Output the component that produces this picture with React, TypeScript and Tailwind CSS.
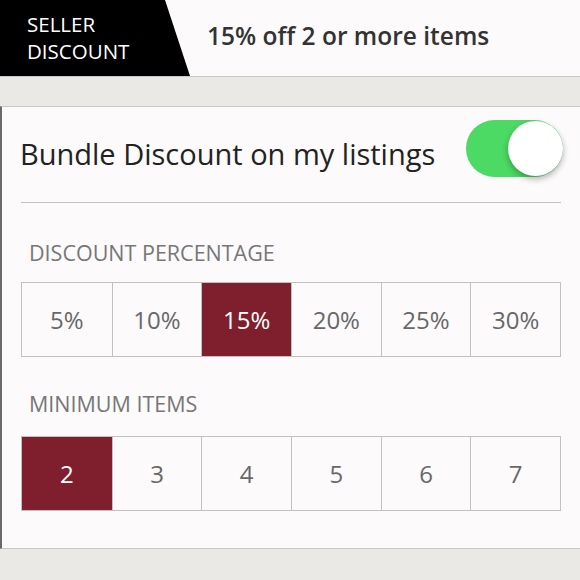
import React from "react";

const pct = ["5%", "10%", "15%", "20%", "25%", "30%"];
const items = ["2", "3", "4", "5", "6", "7"];

function Row({ values, selected }: { values: string[]; selected: number }) {
  return (
    <div className="mx-[19px] grid grid-cols-6 border border-[#c2c0c0] h-[75px]">
      {values.map((v, i) => (
        <div
          key={v}
          className={
            "flex items-center justify-center text-[24px] " +
            (i > 0 ? "border-l border-[#c2c0c0] " : "") +
            (i === selected ? "bg-[#7f1f2d] text-white" : "text-[#686868]")
          }
        >
          {v}
        </div>
      ))}
    </div>
  );
}

export default function App() {
  return (
    <div
      className="w-[580px] h-[580px] overflow-hidden bg-[#ebe9e6] flex flex-col"
      style={{ fontFamily: "'Open Sans', Lato, sans-serif" }}
    >
      <div className="h-[77px] bg-[#fcfafa] flex items-center border-b border-[#c9c7c4] shrink-0">
        <div className="h-full w-[190px] bg-black [clip-path:polygon(0_0,165px_0,190px_100%,0_100%)] flex flex-col justify-center pl-[27px] text-white text-[20.5px] leading-[27px] pb-[1px]">
          <span>SELLER</span>
          <span>DISCOUNT</span>
        </div>
        <div className="ml-[17px] text-[24.5px] font-semibold text-[#333] mb-[4px]">15% off 2 or more items</div>
      </div>
      <div className="h-[29px] shrink-0" />
      <div className="bg-[#fcfafa] border-t border-b border-[#c9c7c4] border-l-2 border-l-[#6a6a6a] h-[443px] shrink-0 flex flex-col">
        <div className="h-[95px] flex justify-between pl-[18px] pr-[17px]">
          <span className="text-[29px] text-[#222] self-center mt-[-2px]">Bundle Discount on my listings</span>
          <div className="relative mt-[13px] w-[97px] h-[57px] rounded-full bg-[#4cd964]">
            <div className="absolute right-0 top-[1px] w-[55px] h-[55px] rounded-full bg-white shadow-[0_3px_6px_rgba(0,0,0,0.3)]" />
          </div>
        </div>
        <div className="mx-[19px] border-t border-[#c4c2c2]" />
        <div className="h-[79px] flex items-end pl-[27px] pb-[14px] text-[21.5px] leading-[30px] text-[#777]">DISCOUNT PERCENTAGE</div>
        <Row values={pct} selected={2} />
        <div className="h-[79px] flex items-end pl-[27px] pb-[17px] text-[21.5px] leading-[30px] text-[#777]">MINIMUM ITEMS</div>
        <Row values={items} selected={0} />
      </div>
    </div>
  );
}
